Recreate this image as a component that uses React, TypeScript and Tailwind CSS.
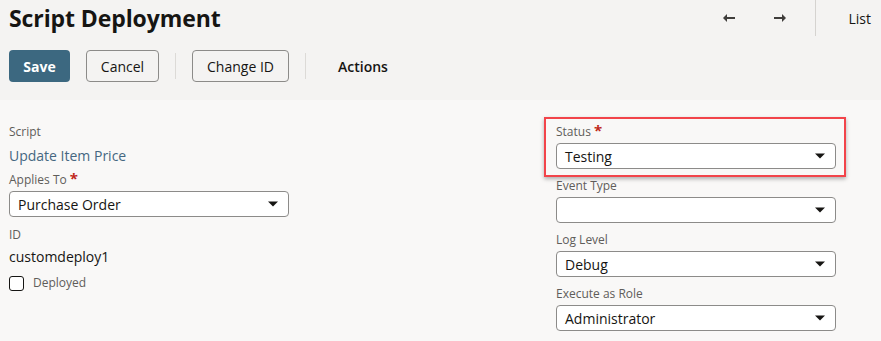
import { ReactNode } from "react";

function Caret() {
  return (
    <svg width="10" height="6" viewBox="0 0 10 6" className="shrink-0">
      <path d="M0 0.5 H10 L5 5.5 Z" fill="#161513" />
    </svg>
  );
}

function Select({ value }: { value: string }) {
  return (
    <div className="w-[280px] h-[26px] bg-white border border-[#8c8b89] rounded-[4px] flex items-center justify-between pl-[8px] pr-[10px]">
      <span className="text-[14px] text-[#161513]">{value}</span>
      <Caret />
    </div>
  );
}

function Label({ children, req }: { children: ReactNode; req?: boolean }) {
  return (
    <div className="text-[12px] leading-[16px] text-[#5f5d5a] flex items-start">
      {children}
      {req && <span className="text-[#c0281c] text-[15px] leading-[12px] ml-[3px] font-bold">*</span>}
    </div>
  );
}

function Arrow({ dir }: { dir: "left" | "right" }) {
  return (
    <svg width="13" height="10" viewBox="0 0 13 10" className={dir === "right" ? "rotate-180" : ""}>
      <path d="M5 1 L1 5 L5 9 Z" fill="#3f3d3b" />
      <rect x="4" y="4" width="9" height="2" fill="#3f3d3b" />
    </svg>
  );
}

export default function App() {
  return (
    <div className="w-[881px] h-[341px] overflow-hidden bg-[#f9f8f7] font-['Open_Sans',sans-serif] text-[#161513]">
      <div className="h-[100px] bg-[#f4f3f2] pl-[9px]">
        <div className="flex items-center justify-between h-[36px]">
          <h1 className="text-[23px] font-bold tracking-[-0.1px] leading-[36px] text-[#161513]">Script Deployment</h1>
          <div className="flex items-center h-[36px]">
            <Arrow dir="left" />
            <div className="w-[39px]" />
            <Arrow dir="right" />
            <div className="w-[28px]" />
            <div className="w-px h-[36px] bg-[#d5d3d0]" />
            <span className="text-[14px] pl-[32px] pr-[10px]">List</span>
          </div>
        </div>
        <div className="flex items-center mt-[14px] text-[14px]">
          <button className="w-[61px] h-[32px] rounded-[4px] bg-[#3c6880] text-white font-bold">Save</button>
          <button className="ml-[16px] w-[73px] h-[32px] rounded-[4px] border border-[#8c8b89] text-[#161513]">Cancel</button>
          <div className="mx-[16px] w-px h-[26px] bg-[#dcdad7]" />
          <button className="w-[97px] h-[32px] rounded-[4px] border border-[#8c8b89] text-[#161513]">Change ID</button>
          <div className="mx-[16px] w-px h-[26px] bg-[#dcdad7]" />
          <span className="ml-[16px] font-semibold">Actions</span>
        </div>
      </div>

      <div className="flex pt-[24px]">
        <div className="w-[280px] ml-[9px] flex flex-col">
          <Label>Script</Label>
          <div className="text-[14px] text-[#456781] mt-[6px] leading-[20px]">Update Item Price</div>
          <div className="mt-[6px]"><Label req>Applies To</Label></div>
          <div className="mt-[3px]"><Select value="Purchase Order" /></div>
          <div className="mt-[10px]"><Label>ID</Label></div>
          <div className="text-[14px] mt-[4px] leading-[20px]">customdeploy1</div>
          <div className="flex items-center mt-[7px]">
            <div className="w-[15px] h-[15px] border border-[#161513] rounded-[3px] bg-white" />
            <span className="ml-[9px] text-[12px] text-[#5f5d5a]">Deployed</span>
          </div>
        </div>

        <div className="ml-[267px] flex flex-col">
          <div className="-ml-[12px] -mt-[7px] w-[302px] border-2 border-[#f2444a] shadow-[0_2px_4px_rgba(0,0,0,0.3)] px-[10px] pt-[5px] pb-[6px]">
            <Label req>Status</Label>
            <div className="mt-[3px]"><Select value="Testing" /></div>
          </div>
          <div className="mt-[1px]"><Label>Event Type</Label></div>
          <div className="mt-[3px]"><Select value="" /></div>
          <div className="mt-[9px]"><Label>Log Level</Label></div>
          <div className="mt-[3px]"><Select value="Debug" /></div>
          <div className="mt-[9px]"><Label>Execute as Role</Label></div>
          <div className="mt-[3px]"><Select value="Administrator" /></div>
        </div>
      </div>
    </div>
  );
}
